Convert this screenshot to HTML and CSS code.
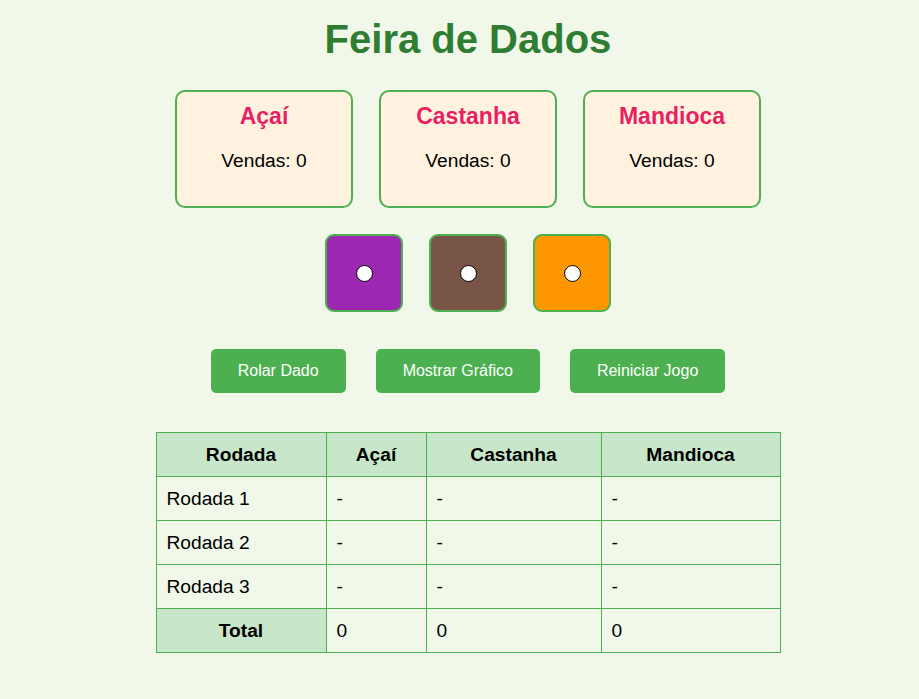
FILE: index.html
```html
<!DOCTYPE html>
<html lang="pt">
<head>
<meta charset="utf-8">
<title>Feira de Dados</title>
<link rel="stylesheet" href="styles.css">
</head>
<body>
<main class="page">
  <h1 class="title">Feira de Dados</h1>
  <section class="cards">
    <div class="card"><h3 class="card-name">Açaí</h3><p class="card-sales">Vendas: 0</p></div>
    <div class="card"><h3 class="card-name">Castanha</h3><p class="card-sales">Vendas: 0</p></div>
    <div class="card"><h3 class="card-name">Mandioca</h3><p class="card-sales">Vendas: 0</p></div>
  </section>
  <section class="dice">
    <div class="die die-acai"><span class="dot"></span></div>
    <div class="die die-castanha"><span class="dot"></span></div>
    <div class="die die-mandioca"><span class="dot"></span></div>
  </section>
  <section class="buttons">
    <button class="btn">Rolar Dado</button>
    <button class="btn">Mostrar Gráfico</button>
    <button class="btn">Reiniciar Jogo</button>
  </section>
  <table class="scores">
    <colgroup>
      <col class="c1"><col class="c2"><col class="c3"><col class="c4">
    </colgroup>
    <thead>
      <tr><th>Rodada</th><th>Açaí</th><th>Castanha</th><th>Mandioca</th></tr>
    </thead>
    <tbody>
      <tr><td>Rodada 1</td><td>-</td><td>-</td><td>-</td></tr>
      <tr><td>Rodada 2</td><td>-</td><td>-</td><td>-</td></tr>
      <tr><td>Rodada 3</td><td>-</td><td>-</td><td>-</td></tr>
      <tr><th class="total">Total</th><td>0</td><td>0</td><td>0</td></tr>
    </tbody>
  </table>
</main>
</body>
</html>
```

FILE: styles.css
```css
html, body {
  margin: 0;
  padding: 0;
  background: #f1f8e9;
}
body {
  font-family: "Liberation Sans", Arial, sans-serif;
  color: #000;
}
.page {
  display: flex;
  flex-direction: column;
  align-items: center;
  padding-left: 17px;
}
.title {
  margin: 16px 0 0;
  font-size: 40px;
  line-height: 46px;
  font-weight: bold;
  color: #2e7d32;
}
.cards {
  display: flex;
  gap: 26px;
  margin-top: 28px;
}
.card {
  box-sizing: border-box;
  width: 178px;
  height: 118px;
  background: #fff3e0;
  border: 2px solid #4caf50;
  border-radius: 10px;
  padding-top: 11px;
  text-align: center;
}
.card-name {
  margin: 0;
  font-size: 23px;
  line-height: 26px;
  font-weight: bold;
  color: #e91e63;
}
.card-sales {
  margin: 21px 0 0;
  font-size: 19.2px;
  line-height: 22px;
}
.dice {
  display: flex;
  gap: 26px;
  margin-top: 26px;
}
.die {
  box-sizing: border-box;
  width: 78px;
  height: 78px;
  border: 2px solid #4caf50;
  border-radius: 9px;
  display: flex;
  align-items: center;
  justify-content: center;
}
.die-acai { background: #9c27b0; }
.die-castanha { background: #795548; }
.die-mandioca { background: #ff9800; }
.dot {
  width: 15px;
  height: 15px;
  border-radius: 50%;
  background: #fff;
  border: 1px solid #000;
}
.buttons {
  display: flex;
  gap: 30px;
  margin-top: 37px;
}
.btn {
  height: 44px;
  padding: 0 27px;
  border: none;
  border-radius: 5px;
  background: #4caf50;
  color: #fff;
  font-family: "Liberation Sans", Arial, sans-serif;
  font-size: 16px;
}
.scores {
  margin-top: 39px;
  border-collapse: collapse;
  table-layout: fixed;
  width: 624px;
  font-size: 19.2px;
}
.c1 { width: 170px; }
.c2 { width: 100px; }
.c3 { width: 175px; }
.c4 { width: 179px; }
.scores th, .scores td {
  border: 1px solid #4caf50;
  padding: 10px 10px;
  line-height: 23px;
  text-align: left;
}
.scores th {
  background: #c8e6c9;
  text-align: center;
  font-weight: bold;
}
```
